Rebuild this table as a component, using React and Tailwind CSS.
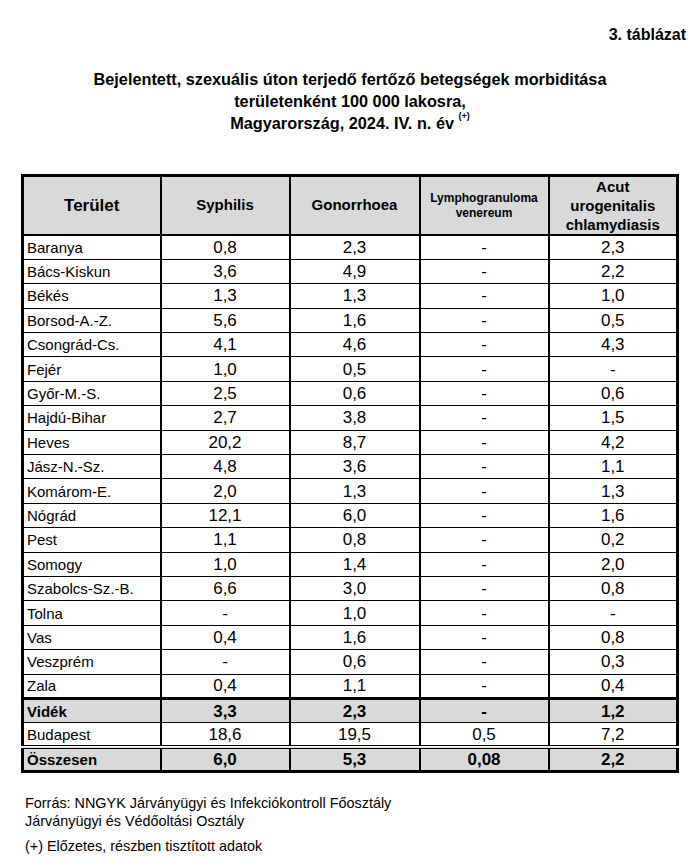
import React from 'react';

const rows = [
  ['Baranya', '0,8', '2,3', '-', '2,3'],
  ['Bács-Kiskun', '3,6', '4,9', '-', '2,2'],
  ['Békés', '1,3', '1,3', '-', '1,0'],
  ['Borsod-A.-Z.', '5,6', '1,6', '-', '0,5'],
  ['Csongrád-Cs.', '4,1', '4,6', '-', '4,3'],
  ['Fejér', '1,0', '0,5', '-', '-'],
  ['Győr-M.-S.', '2,5', '0,6', '-', '0,6'],
  ['Hajdú-Bihar', '2,7', '3,8', '-', '1,5'],
  ['Heves', '20,2', '8,7', '-', '4,2'],
  ['Jász-N.-Sz.', '4,8', '3,6', '-', '1,1'],
  ['Komárom-E.', '2,0', '1,3', '-', '1,3'],
  ['Nógrád', '12,1', '6,0', '-', '1,6'],
  ['Pest', '1,1', '0,8', '-', '0,2'],
  ['Somogy', '1,0', '1,4', '-', '2,0'],
  ['Szabolcs-Sz.-B.', '6,6', '3,0', '-', '0,8'],
  ['Tolna', '-', '1,0', '-', '-'],
  ['Vas', '0,4', '1,6', '-', '0,8'],
  ['Veszprém', '-', '0,6', '-', '0,3'],
  ['Zala', '0,4', '1,1', '-', '0,4'],
];

const narrow = "font-['Liberation_Sans_Narrow','Arial_Narrow','Liberation_Sans',sans-serif]";
const sans = "font-['Liberation_Sans',Arial,sans-serif]";

function Row({ cells, bold, gray, top }) {
  const rowCls = [
    gray ? 'bg-[#d9d9d9]' : 'bg-white',
    top || 'border-t border-black',
  ].join(' ');
  return (
    <tr className={`h-[24.4px] ${rowCls}`}>
      <td className={`pl-[3px] text-[15px] leading-none text-black ${sans} ${bold ? 'font-bold' : ''}`}>{cells[0]}</td>
      {cells.slice(1).map((c, i) => (
        <td key={i} className={`border-l-2 border-black text-center text-[17px] leading-none ${bold ? 'font-bold' : ''} ${c === '-' ? sans + ' text-[14px]' : narrow}`}>{c}</td>
      ))}
    </tr>
  );
}

export default function App() {
  return (
    <div className={`w-[700px] h-[868px] bg-white text-black ${sans}`}>
      <div className="pt-[23px] pr-[14px] text-right">
        <span className={`${narrow} font-bold text-[16px]`}>3. táblázat</span>
      </div>

      <div className={`mt-[21px] text-center font-bold text-[16.3px] leading-[22px] ${narrow}`}>
        <p>Bejelentett, szexuális úton terjedő fertőző betegségek morbiditása</p>
        <p>területenként 100 000 lakosra,</p>
        <p>
          Magyarország, 2024. IV. n. év <sup className="text-[9px] align-[6px]">(+)</sup>
        </p>
      </div>

      <div className="mt-[40px] ml-[21px] w-[655px]">
        <table className="w-full border-collapse border-[3px] border-black table-fixed">
          <colgroup>
            <col className="w-[138px]" />
            <col className="w-[129px]" />
            <col className="w-[130px]" />
            <col className="w-[129px]" />
            <col className="w-[129px]" />
          </colgroup>
          <thead>
            <tr className="h-[58px] bg-[#d9d9d9] border-b-2 border-black">
              <th className="text-[17px] font-bold">Terület</th>
              <th className="border-l-2 border-black text-[15px] font-bold">Syphilis</th>
              <th className="border-l-2 border-black text-[15px] font-bold">Gonorrhoea</th>
              <th className="border-l-2 border-black text-[12px] font-bold leading-[15px]">
                Lymphogranuloma<br />venereum
              </th>
              <th className="border-l-2 border-black text-[15px] font-bold leading-[19px]">
                Acut<br />urogenitalis<br />chlamydiasis
              </th>
            </tr>
          </thead>
          <tbody>
            {rows.map((r, i) => (
              <Row key={r[0]} cells={r} top={i === 0 ? 'border-t-2 border-black' : undefined} />
            ))}
            <Row cells={['Vidék', '3,3', '2,3', '-', '1,2']} bold gray top="border-t-[3px] border-black" />
            <Row cells={['Budapest', '18,6', '19,5', '0,5', '7,2']} />
            <Row cells={['Összesen', '6,0', '5,3', '0,08', '2,2']} bold gray top="border-t-[4px] border-double border-black" />
          </tbody>
        </table>
      </div>

      <div className="mt-[21px] ml-[25px] text-[14.4px] leading-[18px]">
        <p>Forrás: NNGYK Járványügyi és Infekciókontroll Főosztály</p>
        <p>Járványügyi és Védőoltási Osztály</p>
        <p className="mt-[7px]">(+) Előzetes, részben tisztított adatok</p>
      </div>
    </div>
  );
}
